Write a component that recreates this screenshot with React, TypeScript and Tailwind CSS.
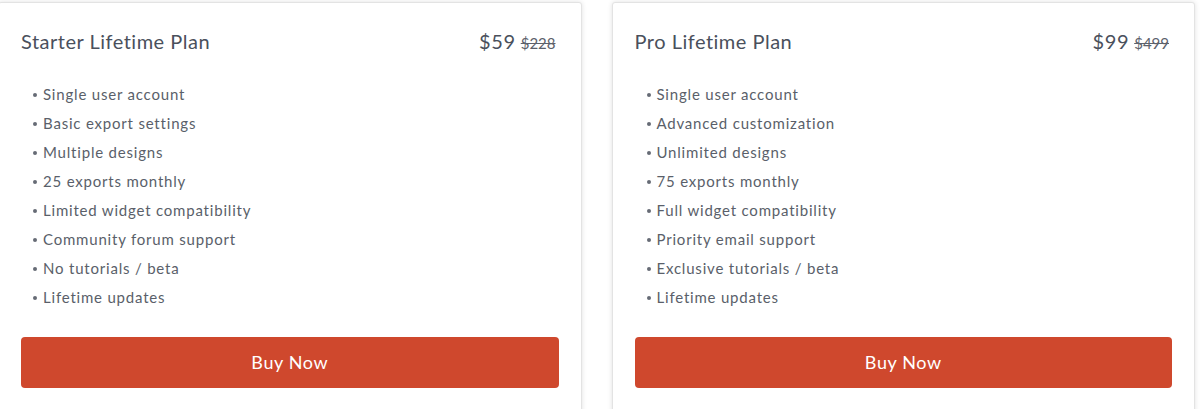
type TPlan = {
  name: string;
  price: string;
  oldPrice: string;
  features: string[];
};

const plans: TPlan[] = [
  {
    name: "Starter Lifetime Plan",
    price: "$59",
    oldPrice: "$228",
    features: [
      "Single user account",
      "Basic export settings",
      "Multiple designs",
      "25 exports monthly",
      "Limited widget compatibility",
      "Community forum support",
      "No tutorials / beta",
      "Lifetime updates",
    ],
  },
  {
    name: "Pro Lifetime Plan",
    price: "$99",
    oldPrice: "$499",
    features: [
      "Single user account",
      "Advanced customization",
      "Unlimited designs",
      "75 exports monthly",
      "Full widget compatibility",
      "Priority email support",
      "Exclusive tutorials / beta",
      "Lifetime updates",
    ],
  },
];

function PlanCard({ plan }: { plan: TPlan }) {
  return (
    <div className="bg-white border border-[#e3e3e3] rounded-[3px] shadow-[0_0_5px_rgba(0,0,0,0.12)] px-[22px] pt-[24px] pb-[30px]">
      <div className="flex flex-row justify-between items-center h-7">
        <h3 className="text-[20px] leading-7 tracking-[0.5px] text-[#4a505c]">{plan.name}</h3>
        <div className="flex flex-row items-baseline gap-[5px] pr-[3px]">
          <span className="text-[20px] leading-7 tracking-[0.6px] text-[#4a505c]">{plan.price}</span>
          <span className="text-[15px] text-[#5c616b] line-through">{plan.oldPrice}</span>
        </div>
      </div>

      <ul className="mt-[25px] pl-[12px]">
        {plan.features.map((feature) => (
          <li key={feature} className="flex flex-row items-center h-[29px] text-[15px] tracking-[0.8px] text-[#5a5f6a]">
            <span className="w-[4px] h-[4px] rounded-full bg-[#666b75] mr-[6px]" />
            {feature}
          </li>
        ))}
      </ul>

      <button className="mt-[25px] w-full h-[51px] rounded-[4px] bg-[#cf482d] text-white text-[18px] tracking-[0.6px]">
        Buy Now
      </button>
    </div>
  );
}

export default function App() {
  return (
    <div className="w-[1200px] h-[409px] overflow-hidden bg-white font-['Lato',sans-serif]">
      <div className="grid grid-cols-2 gap-[30px] w-[1197px] -ml-[2px] pt-[2px]">
        {plans.map((plan) => (
          <PlanCard key={plan.name} plan={plan} />
        ))}
      </div>
    </div>
  );
}
